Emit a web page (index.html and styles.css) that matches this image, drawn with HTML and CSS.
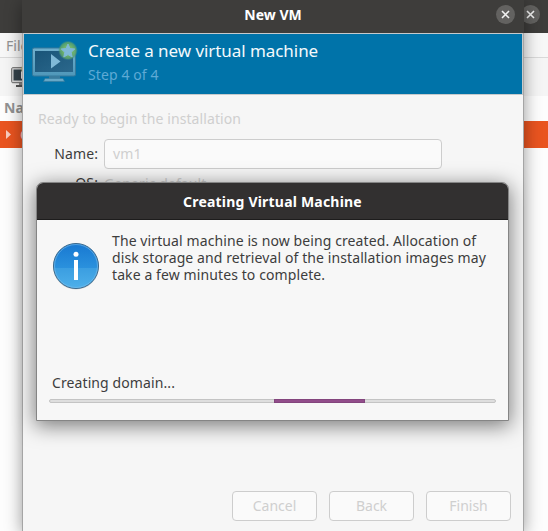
FILE: index.html
```html
<!DOCTYPE html>
<html lang="en">
<head>
<meta charset="utf-8">
<title>New VM</title>
<link rel="stylesheet" href="styles.css">
</head>
<body>
<div class="manager">
  <div class="manager-title">
    <span class="close"><svg viewBox="0 0 19 19"><path d="M6 6l7 7M13 6l-7 7"/></svg></span>
  </div>
  <div class="menubar">File</div>
  <div class="toolbar">
    <svg class="tool-icon" width="24" height="24" viewBox="0 0 24 24">
      <rect x=".7" y="2.700" width="22" height="15" rx="1" fill="#ddd" stroke="#666"/>
      <rect x="2.500" y="4.500" width="18" height="11" fill="#34424b"/>
      <path d="M10 6l6 4-6 4z" fill="#eee"/>
      <circle cx="14" cy="4" r="4" fill="#cfc46a" opacity=".6"/>
      <path d="M8 18h8v2H8z" fill="#888"/><path d="M5 20h13v2H5z" fill="#555"/>
    </svg>
  </div>
  <div class="list-head">Name</div>
  <div class="list-row">
    <svg width="5" height="9" viewBox="0 0 5 9"><path d="M0 0l5 4.500L0 9z" fill="#f9cdbe"/></svg>
    <span>QE</span>
  </div>
</div>

<div class="wizard">
  <div class="wizard-title"><span class="wizard-name">New VM</span>
    <span class="close"><svg viewBox="0 0 19 19"><path d="M6 6l7 7M13 6l-7 7"/></svg></span>
  </div>
  <div class="banner">
    <svg class="vm-icon" width="48" height="44" viewBox="0 0 48 44">
      <defs>
        <radialGradient id="glow"><stop offset=".45" stop-color="#71b66c"/><stop offset=".8" stop-color="#5da36c" stop-opacity=".85"/><stop offset="1" stop-color="#2f8790" stop-opacity="0"/></radialGradient>
        <linearGradient id="frame" x2="0" y2="1"><stop offset="0" stop-color="#71b0cd"/><stop offset="1" stop-color="#4f97b9"/></linearGradient>
        <linearGradient id="screen" x2="1" y2="1"><stop offset="0" stop-color="#195478"/><stop offset="1" stop-color="#2b688c"/></linearGradient>
      </defs>
      <rect x=".5" y="8" width="43" height="28" rx="1.500" fill="url(#frame)" stroke="#35799b"/>
      <rect x="3" y="11" width="38" height="21" fill="url(#screen)"/>
      <path d="M19 14l9.500 7.500L19 28.500z" fill="#80b9d7"/>
      <path d="M17 36h11v3H17z" fill="#3a7c9e"/>
      <path d="M13 38.500h18l1.500 3h-21z" fill="#67a8c7" stroke="#35799b" stroke-width=".6"/>
      <circle cx="36" cy="10.500" r="10" fill="url(#glow)"/>
      <path d="M36 4l2 4.500 4.800.5-3.600 3.200 1 4.800-4.200-2.400-4.200 2.400 1-4.800-3.600-3.200 4.800-.5z" fill="#80b9d7" stroke="#80b9d7" stroke-linejoin="round"/>
    </svg>
    <div>
      <div class="banner-heading">Create a new virtual machine</div>
      <div class="banner-step">Step 4 of 4</div>
    </div>
  </div>
  <div class="wizard-body">
    <div class="intro">Ready to begin the installation</div>
    <div class="form">
      <span class="label">Name:</span><div class="field">vm1</div>
      <span class="label">OS:</span><span class="value">Generic default</span>
    </div>
  </div>
  <div class="actions">
    <div class="button">Cancel</div><div class="button">Back</div><div class="button">Finish</div>
  </div>
</div>

<div class="progress-dialog">
  <div class="dialog-title"><span>Creating Virtual Machine</span></div>
  <div class="message">
    <svg width="48" height="48" viewBox="0 0 48 48">
      <defs><linearGradient id="info" x2="0" y2="1"><stop offset="0" stop-color="#1878d1"/><stop offset=".54" stop-color="#2a91dd"/><stop offset=".55" stop-color="#3b9ee1"/><stop offset="1" stop-color="#4eb0ea"/></linearGradient></defs>
      <circle cx="24" cy="24.500" r="23" fill="#aaa" opacity=".5"/>
      <circle cx="24" cy="24" r="22.500" fill="url(#info)" stroke="#3a688c"/>
      <circle cx="24" cy="24" r="21.500" fill="none" stroke="#7bc0ee" stroke-opacity=".6"/>
      <circle cx="24" cy="12.300" r="2.500" fill="#fff"/><path d="M22 18h4v20h-4z" fill="#fff"/>
    </svg>
    <div class="message-text">The virtual machine is now being created. Allocation of<br>disk storage and retrieval of the installation images may<br>take a few minutes to complete.</div>
  </div>
  <div class="status">Creating domain...</div>
  <div class="track"><div class="pulse"></div></div>
</div>
</body>
</html>
```

FILE: styles.css
```css
* { box-sizing: border-box; }
body {
  margin: 0;
  width: 548px;
  height: 531px;
  overflow: hidden;
  position: relative;
  font: 14px/17px "Noto Sans", "Open Sans", sans-serif;
  color: #3d3d3d;
  background: #fdfdfd;
  white-space: nowrap;
}
svg { display: block; flex: none; }
.manager { height: 531px; }
.manager-title {
  height: 33px;
  background: #3e3d3b;
  display: flex;
  justify-content: flex-end;
  padding: 4.5px 8.5px;
}
.close {
  width: 19px;
  height: 19px;
  border-radius: 50%;
  background: #636260;
}
.close path { stroke: #f2f2f2; stroke-width: 1.6; fill: none; }
.menubar {
  height: 25px;
  padding: 4px 6px;
  background: #f7f7f7;
  border-bottom: 1px solid #d9d9d9;
  color: #929292;
}
.toolbar { height: 38px; background: #f5f5f5; padding: 7px 11px; }
.list-head {
  height: 25px;
  padding: 3px 4px;
  color: #929292;
  font-weight: bold;
  background: #fdfdfd;
}
.list-row {
  height: 27px;
  background: #e95420;
  color: #f9cdbe;
  display: flex;
  align-items: center;
  gap: 9px;
  padding-left: 6px;
}
.wizard {
  position: absolute;
  left: 22px;
  top: 0;
  width: 502px;
  height: 531px;
  display: flex;
  flex-direction: column;
  background: #f6f6f6;
  border: 1px solid #a5a5a5;
  border-width: 0 1px;
  box-shadow: 0 3px 16px rgba(0, 0, 0, .4);
}
.wizard-title {
  height: 33px;
  margin: 0 -1px;
  background: #3e3d3b;
  color: #fff;
  font-weight: bold;
  display: grid;
  grid-template-columns: 1fr 19px;
  padding: 4.5px 9.5px;
}
.wizard-name { padding-left: 19px; padding-top: 1.5px; text-align: center; }
.banner {
  height: 62px;
  background: #0073a9;
  border: 1px solid #c6cacc;
  display: flex;
  padding: 6px 8px;
  gap: 8px;
}
.banner-heading { color: #f4f9fc; font-size: 17px; line-height: 22px; letter-spacing: -.06px; }
.banner-step { color: #5eaad5; line-height: 20px; margin-top: 3px; letter-spacing: .1px; }
.wizard-body { padding: 15px; flex: 1; letter-spacing: .1px; }
.intro { color: #cfcfcf; }
.form {
  display: grid;
  grid-template-columns: 60px 338px;
  column-gap: 6px;
  row-gap: 6px;
  align-items: center;
  margin-top: 12px;
}
.label { text-align: right; position: relative; top: -1px; }
.field {
  height: 30px;
  border: 1px solid #cdcdcd;
  border-radius: 4px;
  background: #fafafa;
  color: #cfcfcf;
  padding: 5px 8px;
}
.value { color: #cfcfcf; }
.actions {
  display: flex;
  justify-content: flex-end;
  gap: 12px;
  padding: 0 12px 10px;
}
.button {
  width: 85px;
  height: 30px;
  border: 1px solid #cdcdcd;
  border-radius: 4px;
  background: #fafafa;
  color: #cfcfcf;
  text-align: center;
  line-height: 28px;
}
.progress-dialog {
  position: absolute;
  left: 36px;
  top: 182px;
  width: 473px;
  height: 239px;
  border: 1px solid #858585;
  border-radius: 7px 7px 0 0;
  background: #f7f7f7;
  box-shadow: 0 4px 20px 1px rgba(0, 0, 0, .5);
}
.dialog-title {
  height: 37px;
  border-radius: 6px 6px 0 0;
  background: #323030;
  border-bottom: 1px solid #1d1c1c;
  color: #fff;
  font-weight: bold;
  text-align: center;
  line-height: 37px;
  letter-spacing: .2px;
}
.message { display: flex; gap: 12px; padding: 12px 15px 0; height: 153px; letter-spacing: .1px; }
.message svg { margin-top: 10px; }
.status { padding-left: 15px; margin-top: 1px; letter-spacing: .1px; }
.track {
  height: 4px;
  margin: 8px 12px;
  border: 1px solid #c4c4c4;
  border-radius: 2px;
  background: #dedede;
}
.pulse { width: 91px; height: 4px; margin: -1px 0 0 224px; background: #924d8b; border: 1px solid #83457d; }
```
